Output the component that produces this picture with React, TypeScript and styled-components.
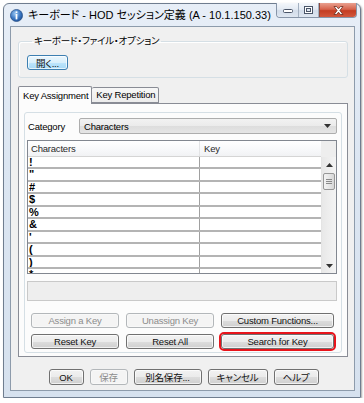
import styled, { createGlobalStyle } from 'styled-components';

const FS = '9.5px';

const GlobalStyle = createGlobalStyle`
  html, body {
    margin: 0;
    background: #ffffff;
  }
  body {
    font-family: "Liberation Sans", "Noto Sans CJK JP", sans-serif;
    font-size: ${FS};
    letter-spacing: -0.2px;
    color: #000;
    font-feature-settings: "palt";
  }
  * {
    box-sizing: border-box;
  }
`;

const Window = styled.div`
  margin: 3px 0 0 3px;
  width: 358px;
  height: 395px;
  border: 1px solid #6f7d8f;
  border-radius: 6px 6px 0 0;
  background: linear-gradient(180deg, #e7eef7 0%, #dce6f2 40%, #d6e1ee 100%);
  display: flex;
  flex-direction: column;
  box-shadow: 1px 1px 2px rgba(0, 0, 0, 0.35);
`;

const TitleBar = styled.div`
  height: 22px;
  display: flex;
  align-items: flex-start;
  padding: 0 3px 0 6px;
`;

const TitleIcon = styled.svg`
  width: 13px;
  height: 13px;
  margin-top: 5px;
  flex: none;
`;

const TitleText = styled.div`
  margin: 4px 0 0 5px;
  font-size: 11px;
  line-height: 14px;
  letter-spacing: 0;
  white-space: nowrap;
  flex: 1;
`;

const CaptionGroup = styled.div`
  display: flex;
  height: 15px;
  margin-top: -1px;
  border: 1px solid #8795a8;
  border-top: none;
  border-radius: 0 0 4px 4px;
  overflow: hidden;
`;

const CaptionButton = styled.div<{ $w: number; $close?: boolean }>`
  width: ${(p) => p.$w}px;
  height: 100%;
  display: flex;
  align-items: center;
  justify-content: center;
  border-left: ${(p) => (p.$close ? '1px solid #8f4a3e' : 'none')};
  border-right: ${(p) => (p.$close ? 'none' : '1px solid #a3b0c0')};
  background: ${(p) =>
    p.$close
      ? 'linear-gradient(180deg, #e9a08f 0%, #d6634c 45%, #c43d22 55%, #d2583d 100%)'
      : 'linear-gradient(180deg, #f4f7fb 0%, #e3eaf3 45%, #d2dce9 55%, #dfe7f1 100%)'};
`;

const ClientArea = styled.div`
  flex: 1;
  margin: 0 5px 6px 6px;
  border: 1px solid #8d9bab;
  background: #f0f0f0;
  padding: 0 6px 0 7px;
  display: flex;
  flex-direction: column;
`;

const GroupBox = styled.fieldset`
  margin: 8px 0 0;
  padding: 8px 8px 7px;
  border: 1px solid #d5dfe5;
  border-radius: 3px;
  box-shadow: inset 1px 1px 0 #ffffff;
`;

const GroupLabel = styled.legend`
  margin-left: 5px;
  padding: 0 2px;
  font-size: ${FS};
  line-height: 12px;
`;

const Button = styled.div<{ $w?: number; $h?: number; $disabled?: boolean; $hot?: boolean; $marked?: boolean }>`
  width: ${(p) => (p.$w ? `${p.$w}px` : 'auto')};
  height: ${(p) => p.$h ?? 15}px;
  display: flex;
  align-items: center;
  justify-content: center;
  font-size: ${FS};
  white-space: nowrap;
  border-radius: 3px;
  border: 1px solid ${(p) => (p.$disabled ? '#b3b7ba' : p.$hot ? '#3c7fb1' : '#707070')};
  color: ${(p) => (p.$disabled ? '#8c8c8c' : '#111')};
  background: ${(p) =>
    p.$disabled
      ? '#f4f4f4'
      : p.$hot
        ? 'linear-gradient(180deg, #eaf6fd 0%, #d9f0fc 50%, #bee6fd 51%, #a7d9f5 100%)'
        : 'linear-gradient(180deg, #f2f2f2 0%, #ebebeb 50%, #dddddd 51%, #cfcfcf 100%)'};
  box-shadow: inset 0 0 0 1px ${(p) => (p.$disabled ? '#f8f8f8' : 'rgba(255,255,255,0.7)')};
  outline: ${(p) => (p.$marked ? '2px solid #e8141b' : 'none')};
  outline-offset: 0;
`;

const Tabs = styled.div`
  display: flex;
  align-items: flex-end;
  margin-top: 8px;
  height: 17px;
`;

const Tab = styled.div<{ $active?: boolean }>`
  position: relative;
  z-index: ${(p) => (p.$active ? 2 : 1)};
  height: ${(p) => (p.$active ? 18 : 16)}px;
  margin-bottom: ${(p) => (p.$active ? -1 : 0)}px;
  padding: 0 3px 0 4px;
  border: 1px solid #898c95;
  border-bottom: ${(p) => (p.$active ? 'none' : '1px solid #898c95')};
  border-left-width: ${(p) => (p.$active ? 1 : 0)}px;
  border-radius: 2px 2px 0 0;
  background: ${(p) => (p.$active ? '#fcfcfc' : 'linear-gradient(180deg, #f7f7f7, #ececec)')};
  display: flex;
  align-items: center;
  font-size: ${FS};
  line-height: 12px;
  white-space: nowrap;
`;

const TabPanel = styled.div`
  border: 1px solid #898c95;
  background: #fcfcfc;
  padding: 8px 5px 3px;
`;

const InnerFrame = styled.div`
  border: 1px solid #d5dfe5;
  border-radius: 3px;
  padding: 5px 4px 3px 2px;
  display: flex;
  flex-direction: column;
`;

const CategoryRow = styled.div`
  display: flex;
  align-items: center;
  height: 16px;
`;

const CategoryLabel = styled.div`
  width: 52px;
  padding-left: 1px;
  font-size: ${FS};
`;

const Combo = styled.div`
  flex: 1;
  height: 16px;
  border: 1px solid #adadad;
  border-radius: 2px;
  background: linear-gradient(180deg, #f2f2f2 0%, #ebebeb 50%, #dddddd 51%, #e5e5e5 100%);
  display: flex;
  align-items: center;
  padding: 0 5px 0 4px;
  font-size: ${FS};
`;

const ComboText = styled.span`
  flex: 1;
`;

const ListBox = styled.div`
  margin-top: 6px;
  height: 134px;
  border: 1px solid #828790;
  display: flex;
  background: #ffffff;
`;

const Table = styled.div`
  flex: 1;
  overflow: hidden;
  display: flex;
  flex-direction: column;
`;

const HeaderRow = styled.div`
  flex: none;
  height: 16px;
  display: grid;
  grid-template-columns: 172px 1fr;
  background: linear-gradient(180deg, #ffffff 0%, #f7f8fa 60%, #f1f2f4 100%);
  border-bottom: 1px solid #d5d5d5;
`;

const HeaderCell = styled.div<{ $first?: boolean }>`
  display: flex;
  align-items: center;
  padding-left: ${(p) => (p.$first ? 3 : 4)}px;
  font-size: ${FS};
  border-right: ${(p) => (p.$first ? '1px solid #e3e4e6' : 'none')};
  color: #2a2a2a;
`;

const Row = styled.div`
  flex: none;
  height: 12.44px;
  display: grid;
  grid-template-columns: 172px 1fr;
  border-bottom: 2px solid #b4b4b4;
`;

const CharCell = styled.div`
  border-right: 1px solid #a0a0a0;
  padding-left: 1px;
  font-weight: bold;
  font-size: 11px;
  line-height: 10px;
  overflow: hidden;
`;

const ScrollColumn = styled.div`
  width: 15px;
  display: flex;
  flex-direction: column;
  background: #f0f0f0;
`;

const ScrollCorner = styled.div`
  height: 16px;
  flex: none;
  background: #eeeeee;
`;

const ScrollTrack = styled.div`
  flex: 1;
  display: flex;
  flex-direction: column;
  border-left: 1px solid #e4e4e4;
  background: linear-gradient(90deg, #e8e8e8, #f4f4f4);
`;

const ScrollArrow = styled.div<{ $end?: boolean }>`
  height: 15px;
  flex: none;
  display: flex;
  align-items: center;
  justify-content: center;
  margin-top: ${(p) => (p.$end ? 'auto' : '0')};
`;

const Thumb = styled.div`
  height: 17px;
  margin: 1px 1px 0;
  border: 1px solid #979797;
  border-radius: 2px;
  background: linear-gradient(90deg, #f3f3f3 0%, #e7e7e7 50%, #d6d6d6 100%);
  display: flex;
  flex-direction: column;
  align-items: center;
  justify-content: center;
  gap: 1px;
`;

const Grip = styled.div`
  width: 6px;
  height: 1px;
  background: #8a8a8a;
`;

const Description = styled.div`
  margin-top: 7px;
  height: 20px;
  border: 1px solid #c9c9c9;
  background: #eeeeee;
`;

const ButtonGrid = styled.div`
  margin-top: 12px;
  padding-left: 4px;
  display: grid;
  grid-template-columns: 88px 88px 113px;
  column-gap: 7px;
  row-gap: 6px;
`;

const DialogButtons = styled.div`
  margin-top: 12px;
  display: flex;
  justify-content: center;
  gap: 6px;
  padding-left: 1px;
`;

const chars = ['!', '"', '#', '$', '%', '&', "'", '(', ')', '*'];

const Arrow = ({ up }: { up?: boolean }) => (
  <svg width="7" height="4" viewBox="0 0 7 4">
    <path d={up ? 'M0 4 L3.5 0 L7 4 Z' : 'M0 0 L7 0 L3.5 4 Z'} fill="#333" />
  </svg>
);

export default function App() {
  return (
    <>
      <GlobalStyle />
      <Window>
        <TitleBar>
          <TitleIcon viewBox="0 0 12 12">
            <defs>
              <radialGradient id="orb" cx="40%" cy="35%" r="70%">
                <stop offset="0%" stopColor="#9cc8f2" />
                <stop offset="60%" stopColor="#3a76c2" />
                <stop offset="100%" stopColor="#1d4f93" />
              </radialGradient>
            </defs>
            <circle cx="6" cy="6" r="5.6" fill="url(#orb)" stroke="#1c467f" strokeWidth="0.6" />
            <rect x="5.2" y="2.2" width="1.6" height="1.5" fill="#ffffff" />
            <rect x="5.2" y="4.6" width="1.6" height="5" fill="#ffffff" />
          </TitleIcon>
          <TitleText>キーボード - HOD セッション定義 (A - 10.1.150.33)</TitleText>
          <CaptionGroup>
            <CaptionButton $w={22}>
              <svg width="10" height="5" viewBox="0 0 10 5">
                <rect x="0.5" y="1.5" width="9" height="3" rx="1" fill="#fff" stroke="#4a5568" />
              </svg>
            </CaptionButton>
            <CaptionButton $w={20}>
              <svg width="9" height="8" viewBox="0 0 9 8">
                <rect x="0.5" y="0.5" width="8" height="7" fill="#fff" stroke="#4a5568" />
                <rect x="2.5" y="2.5" width="4" height="3" fill="#dde5ef" stroke="#4a5568" />
              </svg>
            </CaptionButton>
            <CaptionButton $w={37} $close>
              <svg width="11" height="9" viewBox="0 0 11 9">
                <path
                  d="M1 0.5 L3.5 0.5 L5.5 2.8 L7.5 0.5 L10 0.5 L6.9 4.5 L10 8.5 L7.5 8.5 L5.5 6.2 L3.5 8.5 L1 8.5 L4.1 4.5 Z"
                  fill="#ffffff"
                  stroke="#6b2a1c"
                  strokeWidth="0.8"
                  strokeLinejoin="round"
                />
              </svg>
            </CaptionButton>
          </CaptionGroup>
        </TitleBar>
        <ClientArea>
          <GroupBox>
            <GroupLabel>キーボード・ファイル・オプション</GroupLabel>
            <Button $w={41} $hot>
              開く...
            </Button>
          </GroupBox>
          <Tabs>
            <Tab $active>Key Assignment</Tab>
            <Tab>Key Repetition</Tab>
          </Tabs>
          <TabPanel>
            <InnerFrame>
              <CategoryRow>
                <CategoryLabel>Category</CategoryLabel>
                <Combo>
                  <ComboText>Characters</ComboText>
                  <Arrow />
                </Combo>
              </CategoryRow>
              <ListBox>
                <Table>
                  <HeaderRow>
                    <HeaderCell $first>Characters</HeaderCell>
                    <HeaderCell>Key</HeaderCell>
                  </HeaderRow>
                  {chars.map((c) => (
                    <Row key={c}>
                      <CharCell>{c}</CharCell>
                      <div />
                    </Row>
                  ))}
                </Table>
                <ScrollColumn>
                  <ScrollCorner />
                  <ScrollTrack>
                    <ScrollArrow>
                      <Arrow up />
                    </ScrollArrow>
                    <Thumb>
                      <Grip />
                      <Grip />
                      <Grip />
                    </Thumb>
                    <ScrollArrow $end>
                      <Arrow />
                    </ScrollArrow>
                  </ScrollTrack>
                </ScrollColumn>
              </ListBox>
              <Description />
              <ButtonGrid>
                <Button $disabled>Assign a Key</Button>
                <Button $disabled>Unassign Key</Button>
                <Button>Custom Functions...</Button>
                <Button>Reset Key</Button>
                <Button>Reset All</Button>
                <Button $marked>Search for Key</Button>
              </ButtonGrid>
            </InnerFrame>
          </TabPanel>
          <DialogButtons>
            <Button $w={35} $h={16}>
              OK
            </Button>
            <Button $w={38} $h={16} $disabled>
              保存
            </Button>
            <Button $w={68} $h={16}>
              別名保存...
            </Button>
            <Button $w={60} $h={16}>
              キャンセル
            </Button>
            <Button $w={45} $h={16}>
              ヘルプ
            </Button>
          </DialogButtons>
        </ClientArea>
      </Window>
    </>
  );
}
